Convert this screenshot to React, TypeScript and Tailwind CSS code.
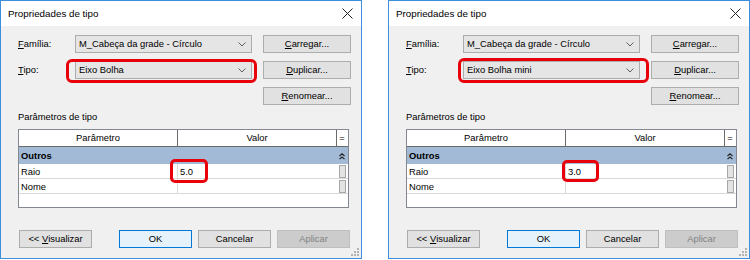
import React from "react";

const Chevron = () => (
  <svg width="8" height="5" viewBox="0 0 8 5" className="shrink-0">
    <path d="M0.5 0.5 L4 4 L7.5 0.5" fill="none" stroke="#606060" strokeWidth="1" />
  </svg>
);

const U = ({ c }: { c: string }) => <span className="underline underline-offset-[1px]">{c}</span>;

const Btn = ({ children, w = "w-[88px]", extra = "" }: { children: React.ReactNode; w?: string; extra?: string }) => (
  <div className={`${w} h-[18px] flex items-center justify-center border border-[#adadad] bg-[#e1e1e1] text-black ${extra}`}>
    {children}
  </div>
);

const Combo = ({ text }: { text: string }) => (
  <div className="w-[177px] h-[18px] flex items-center justify-between border border-[#acacac] bg-[#e5e5e5] pl-[3px] pr-[5px]">
    <span>{text}</span>
    <Chevron />
  </div>
);

function Dialog({
  tipo,
  raio,
  tipoBox,
  raioBox,
}: {
  tipo: string;
  raio: string;
  tipoBox: string;
  raioBox: string;
}) {
  return (
    <div className="relative w-[362px] h-[259px] border border-[#3d8fde] bg-[#f0f0f0] flex flex-col text-[9.4px] leading-none text-black">
      <div className="h-[25px] bg-white flex items-center justify-between pl-[7px] pr-[8px]">
        <span className="text-[9.8px]">Propriedades de tipo</span>
        <svg width="11" height="11" viewBox="0 0 11 11">
          <path d="M0.5 0.5 L10.5 10.5 M10.5 0.5 L0.5 10.5" stroke="#222" strokeWidth="1" />
        </svg>
      </div>
      <div className="flex flex-col pl-[17px] pt-[9px]">
        <div className="flex items-center h-[18px]">
          <div className="w-[57px]"><U c="F" />amília:</div>
          <Combo text="M_Cabeça da grade - Círculo" />
          <div className="ml-[11px]"><Btn><U c="C" />arregar...</Btn></div>
        </div>
        <div className="flex items-center h-[18px] mt-[8px]">
          <div className="w-[57px]"><U c="T" />ipo:</div>
          <Combo text={tipo} />
          <div className="ml-[11px]"><Btn><U c="D" />uplicar...</Btn></div>
        </div>
        <div className="flex items-center h-[18px] mt-[8px] pl-[245px]">
          <Btn><U c="R" />enomear...</Btn>
        </div>
        <div className="h-[14px] mt-[5px] flex items-center">Parâmetros de tipo</div>
        <div className="mt-[5px] w-[331px] h-[79px] border border-[#828790] bg-white flex flex-col">
          <div className="flex h-[17px] border-b border-[#6a6a6a]">
            <div className="w-[159px] flex items-center justify-center border-r border-[#6a6a6a]">Parâmetro</div>
            <div className="w-[159px] flex items-center justify-center border-r border-[#6a6a6a]">Valor</div>
            <div className="w-[10px] flex items-center justify-center">=</div>
          </div>
          <div className="flex h-[17px] bg-[#a3bad6] items-center justify-between pl-[2px] pr-[3px] pt-[1px]">
            <span className="font-bold">Outros</span>
            <svg width="6" height="7" viewBox="0 0 6 7">
              <path d="M0.5 3 L3 0.8 L5.5 3 M0.5 6.2 L3 4 L5.5 6.2" fill="none" stroke="#222" strokeWidth="1.1" />
            </svg>
          </div>
          <div className="flex h-[15px] border-b border-[#d9d9d9]">
            <div className="w-[159px] flex items-center pl-[2px] pt-[1px] border-r border-[#d9d9d9]">Raio</div>
            <div className="w-[159px] flex items-center pl-[2px] pt-[1px]">{raio}</div>
            <div className="w-[11px] flex items-center justify-center">
              <div className="w-[7px] h-[13px] bg-[#e3e3e3] border border-[#a8a8a8]" />
            </div>
          </div>
          <div className="flex h-[15px] border-b border-[#d9d9d9]">
            <div className="w-[159px] flex items-center pl-[2px] pt-[1px] border-r border-[#d9d9d9]">Nome</div>
            <div className="w-[159px]" />
            <div className="w-[11px] flex items-center justify-center">
              <div className="w-[7px] h-[13px] bg-[#e3e3e3] border border-[#a8a8a8]" />
            </div>
          </div>
        </div>
        <div className="flex items-center mt-[22px] pl-[1px]">
          <Btn w="w-[73px]">&lt;&lt;&nbsp;<U c="V" />isualizar</Btn>
          <div className="ml-[27px]">
            <Btn w="w-[73px]" extra="!border-[#0078d7] !bg-[#e5f1fb]">OK</Btn>
          </div>
          <div className="ml-[6px]"><Btn w="w-[73px]">Cancelar</Btn></div>
          <div className="ml-[6px]">
            <Btn w="w-[73px]" extra="!border-[#bfbfbf] !bg-[#cccccc] !text-[#838383]">Aplicar</Btn>
          </div>
        </div>
      </div>
      <svg className="absolute right-[2px] bottom-[2px]" width="8" height="8" viewBox="0 0 8 8">
        <g fill="#b4b4b4">
          <rect x="6" y="0" width="2" height="2" />
          <rect x="3" y="3" width="2" height="2" />
          <rect x="6" y="3" width="2" height="2" />
          <rect x="0" y="6" width="2" height="2" />
          <rect x="3" y="6" width="2" height="2" />
          <rect x="6" y="6" width="2" height="2" />
        </g>
      </svg>
      <div className={`absolute border-[3px] border-[#e8000b] rounded-[6px] ${tipoBox}`} />
      <div className={`absolute border-[3px] border-[#e8000b] rounded-[5px] ${raioBox}`} />
    </div>
  );
}

export default function App() {
  return (
    <div className="w-[750px] h-[260px] bg-white flex gap-[26px] font-['Liberation_Sans',Arial,sans-serif]">
      <Dialog
        tipo="Eixo Bolha"
        raio="5.0"
        tipoBox="left-[65px] top-[58px] w-[191px] h-[24px]"
        raioBox="left-[169px] top-[158px] w-[38px] h-[24px]"
      />
      <Dialog
        tipo="Eixo Bolha mini"
        raio="3.0"
        tipoBox="left-[69px] top-[57px] w-[191px] h-[25px]"
        raioBox="left-[173px] top-[159px] w-[37px] h-[22px]"
      />
    </div>
  );
}
